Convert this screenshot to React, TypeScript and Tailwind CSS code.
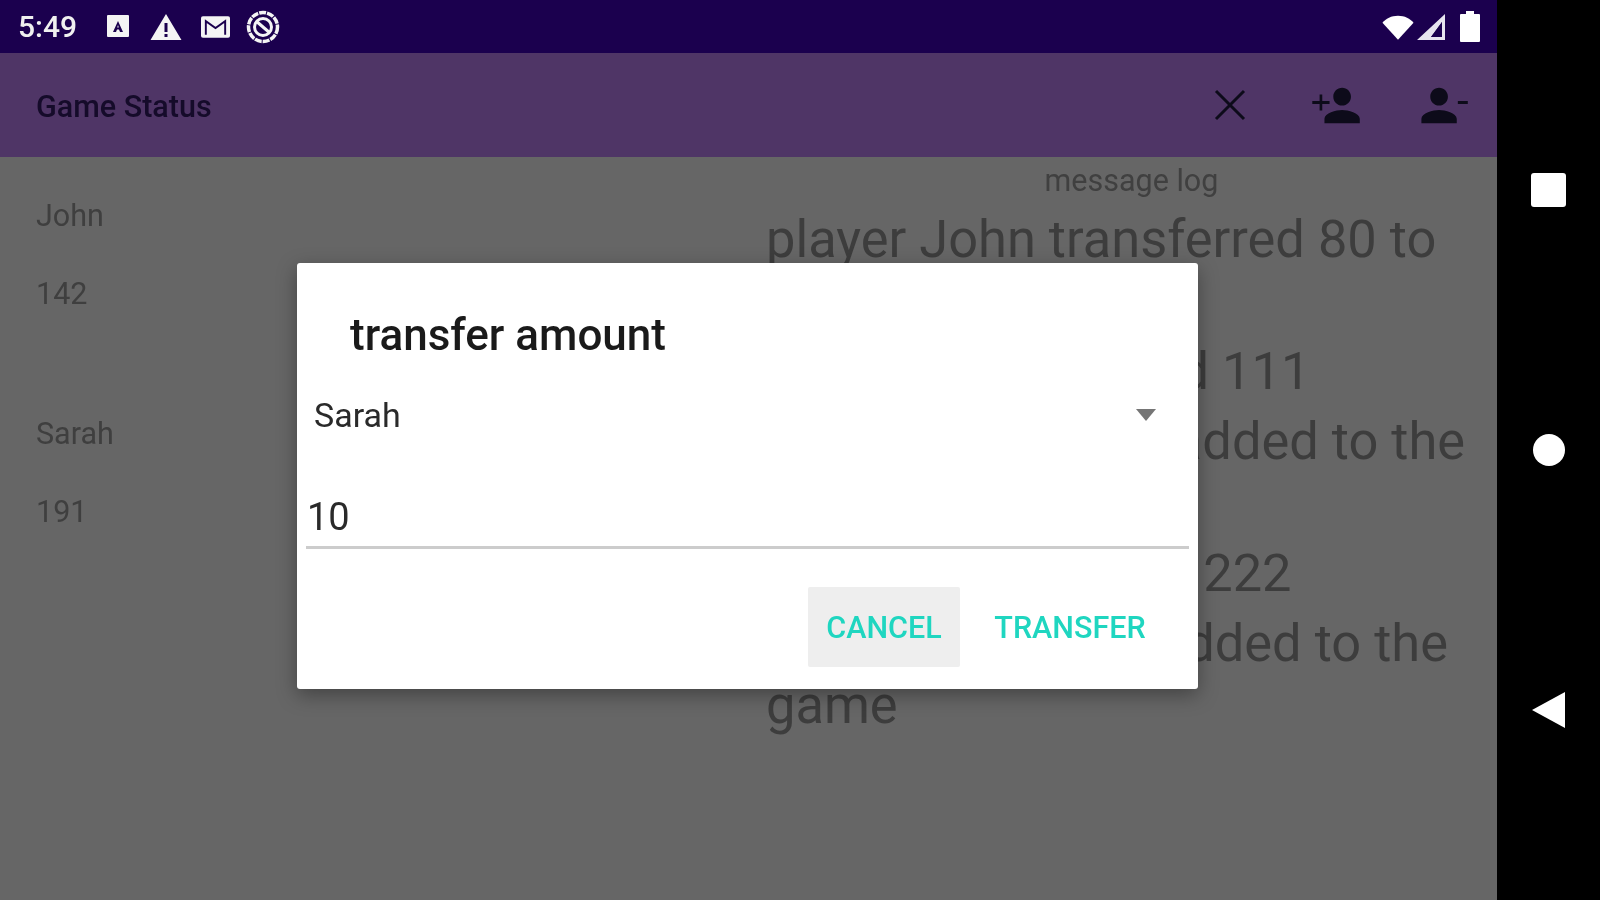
import React from "react";

const font = { fontFamily: "Roboto, sans-serif" };

function StatusLeftIcons() {
  return (
    <div className="flex items-center">
      <svg className="ml-[30px]" width="24" height="25" viewBox="0 0 24 25">
        <path fill="#f4f4f4" fillRule="evenodd" d="M2 1h20a1 1 0 0 1 1 1v20a1 1 0 0 1-1 1H2a1 1 0 0 1-1-1V2a1 1 0 0 1 1-1zM12 7l-5 11h3l1-2.500h2L14 18h3zM12 11l.8 2.500h-1.600z" />
      </svg>
      <svg className="ml-[20px]" width="32" height="28" viewBox="0 0 32 28">
        <path fill="#f4f4f4" fillRule="evenodd" d="M16 1l15.500 26H.5zM14.500 10v9h3v-9zM14.500 21v3h3v-3z" />
      </svg>
      <svg className="ml-[19px]" width="29" height="24" viewBox="0 0 30 24">
        <path fill="#f4f4f4" d="M2 1h26a2 2 0 0 1 2 2v18a2 2 0 0 1-2 2H2a2 2 0 0 1-2-2V3a2 2 0 0 1 2-2z" />
        <path fill="none" stroke="#1b004e" strokeWidth="2" d="M5 20V6l10 7 10-7v14" />
      </svg>
      <svg className="ml-[16px]" width="34" height="34" viewBox="0 0 34 34" fill="none" stroke="#f4f4f4">
        <circle cx="17" cy="17" r="14.500" strokeWidth="3.500" strokeDasharray="7 1" />
        <circle cx="17" cy="17" r="8.500" strokeWidth="3" />
        <path d="M10 11l14 12" strokeWidth="3" />
      </svg>
    </div>
  );
}

function StatusRightIcons() {
  return (
    <div className="flex items-center gap-[2px] mr-[16px]">
      <svg width="32" height="28" viewBox="0 0 34 28">
        <path fill="#ffffff" d="M17 27.500L.5 9.500C4 5 10 2 17 2s13 3 16.500 7.500z" />
      </svg>
      <svg width="30" height="28" viewBox="0 0 30 28">
        <path fill="#e6e4ee" fillRule="evenodd" d="M29 1v26H1zM26 9l-11 15h11z" />
        <path fill="#1b004e" d="M26 9L15 24h11z" opacity="0.9" />
      </svg>
      <svg className="ml-[11px]" width="22" height="31" viewBox="0 0 22 31">
        <path fill="#ffffff" d="M7 0h8v3h5a1 1 0 0 1 1 1v26a1 1 0 0 1-1 1H2a1 1 0 0 1-1-1V4a1 1 0 0 1 1-1h5z" />
      </svg>
    </div>
  );
}

function PersonAdd() {
  return (
    <svg width="53" height="53" viewBox="0 0 24 24" fill="#0d0b1a">
      <path d="M15 12c2.210 0 4-1.790 4-4s-1.790-4-4-4-4 1.790-4 4 1.790 4 4 4zm-9-2V7H4.800v3H1.500v1.300h3.300v3H6v-3h3.300V10H6zm9 4c-2.670 0-8 1.340-8 4v2h16v-2c0-2.660-5.330-4-8-4z" />
    </svg>
  );
}

function PersonRemove() {
  return (
    <svg width="53" height="53" viewBox="0 0 24 24" fill="#0d0b1a">
      <path d="M10 12c2.210 0 4-1.790 4-4s-1.790-4-4-4-4 1.790-4 4 1.790 4 4 4zm8.500-2v1.300H23V10h-4.500zM10 14c-2.670 0-8 1.340-8 4v2h16v-2c0-2.660-5.330-4-8-4z" />
    </svg>
  );
}

const messages = [
  "player John transferred 80 to Sarah",
  "player John earned 111",
  "player Sarah was added to the game",
  "player John joined 222",
  "player John was added to the game",
];

export default function App() {
  return (
    <div className="bg-black w-[1600px] h-[900px] overflow-hidden">
      <div className="relative flex w-[1600px] h-[900px] overflow-hidden bg-black blur-[0.6px]" style={font}>
        <div className="flex flex-col w-[1497px] h-full bg-[#666666]">
          <div className="flex items-center justify-between h-[53px] bg-[#1b004e] shrink-0">
            <div className="flex items-center pl-[18px]">
              <span className="text-[30px] leading-none font-medium text-[#f0f0f0] w-[58px]">5:49</span>
              <StatusLeftIcons />
            </div>
            <StatusRightIcons />
          </div>

          <div className="flex items-center justify-between h-[104px] bg-[#4f3566] shrink-0 pl-[36px] pr-[27px]">
            <span className="text-[30.5px] font-medium text-[#150b2a] pt-[4px]">Game Status</span>
            <div className="flex items-center">
              <svg width="32" height="32" viewBox="0 0 32 32" stroke="#0d0b1a" strokeWidth="3" className="mr-[63px]">
                <path d="M2 2l28 28M30 2L2 30" />
              </svg>
              <div className="mr-[55px]"><PersonAdd /></div>
              <PersonRemove />
            </div>
          </div>

          <div className="flex flex-1 min-h-0">
            <div className="w-[766px] pl-[36px] pt-[40px] text-[30.5px] leading-[38px] text-[#3f3f3f]">
              <div>John</div>
              <div className="mt-[40px]">142</div>
              <div className="mt-[102px]">Sarah</div>
              <div className="mt-[40px]">191</div>
            </div>
            <div className="flex-1 pt-[6px]">
              <div className="text-center text-[30.5px] leading-[36px] text-[#404040]">message log</div>
              <div className="flex flex-col gap-[8px] mt-[9px] text-[52.4px] leading-[62px] text-[#3d3d3d]">
                {messages.map((m) => (
                  <div key={m}>{m}</div>
                ))}
              </div>
            </div>
          </div>
        </div>

        <div className="flex flex-col w-[103px] h-full items-center justify-between pt-[173px] pb-[172px]">
          <div className="w-[35px] h-[34px] bg-white rounded-[3px]" />
          <div className="w-[32px] h-[32px] bg-white rounded-full" />
          <svg width="36" height="36" viewBox="0 0 36 36"><path fill="#fff" d="M1 18L34 0v36z" /></svg>
        </div>

        <div className="absolute left-[297px] top-[263px] w-[901px] h-[426px] bg-white rounded-[3px] shadow-[0_6px_20px_rgba(0,0,0,0.35)] flex flex-col">
          <div className="pl-[53px] pt-[42px] text-[44px] leading-[60px] font-medium text-[#1a1a1a] whitespace-nowrap">transfer amount</div>
          <div className="flex items-center justify-between pl-[17px] pr-[42px] mt-[25px] h-[50px]">
            <span className="text-[34px] text-[#2a2a2a]">Sarah</span>
            <svg width="20" height="12" viewBox="0 0 20 12"><path fill="#757575" d="M0 0h20L10 12z" /></svg>
          </div>
          <div className="mx-[9px] mt-[50px] h-[59px] border-b-[3px] border-[#cccccc] text-[38px] leading-[54px] text-[#2a2a2a] pl-[1px]">10</div>
          <div className="flex justify-end pr-[52px] mt-[38px]">
            <div className="flex items-center justify-center w-[152px] h-[80px] pt-[2px] bg-[#eeeeee] rounded-[2px] text-[30.5px] font-medium text-[#1fd6c0]">CANCEL</div>
            <div className="flex items-center justify-center w-[152px] h-[80px] pt-[2px] ml-[34px] text-[30.5px] font-medium text-[#1fd6c0]">TRANSFER</div>
          </div>
        </div>
      </div>
    </div>
  );
}
